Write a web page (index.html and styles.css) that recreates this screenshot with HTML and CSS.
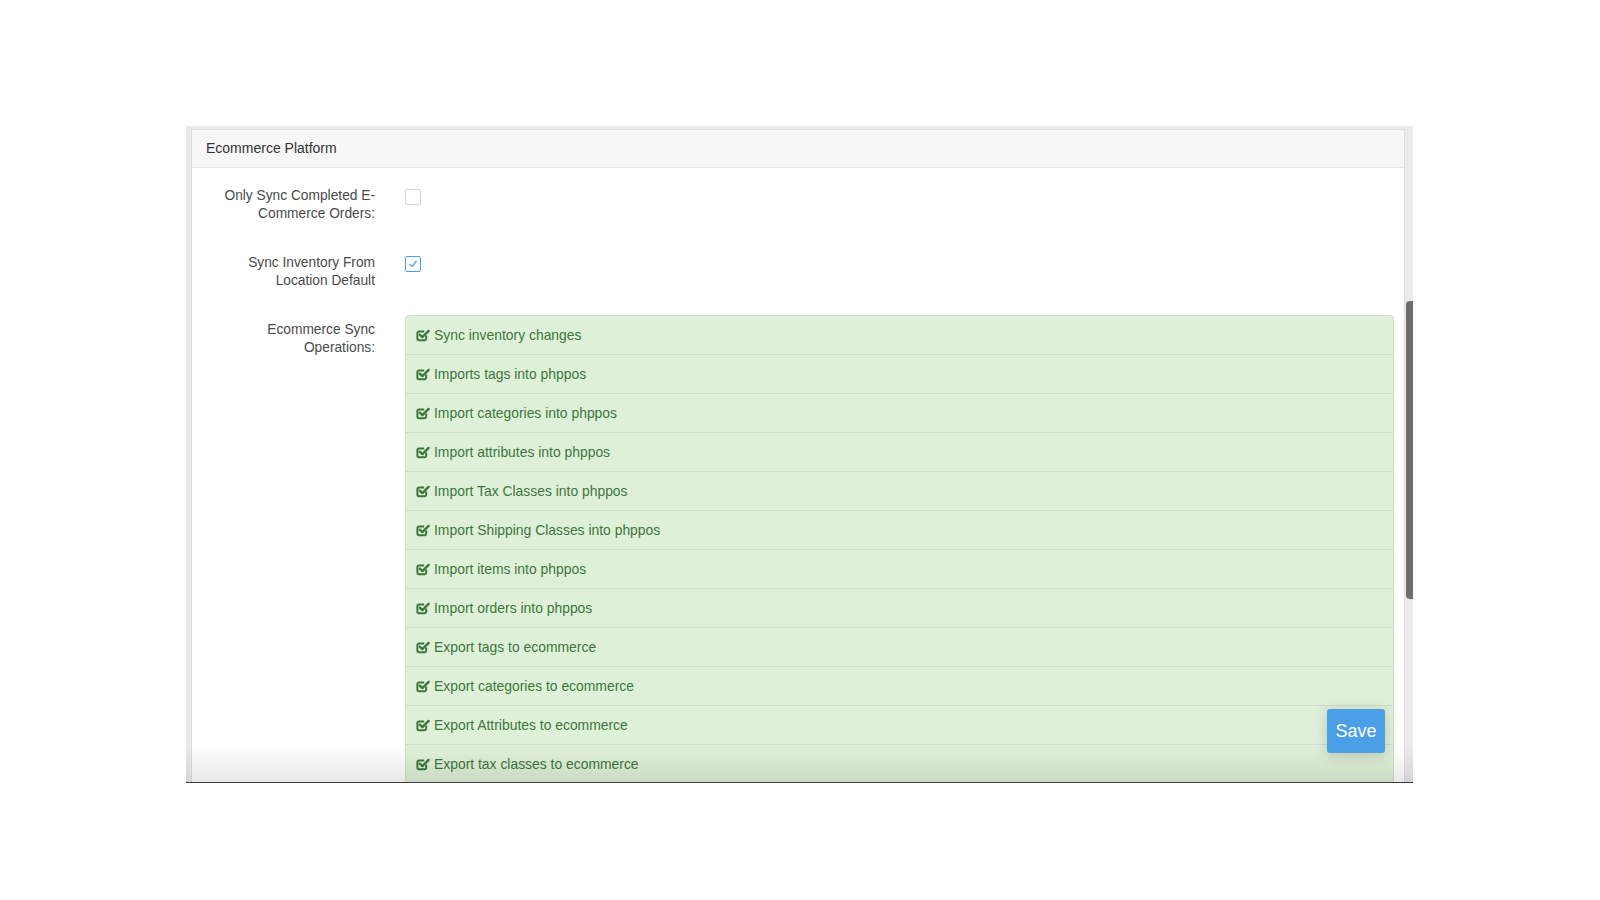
FILE: index.html
```html
<!DOCTYPE html>
<html lang="en">
<head>
<meta charset="utf-8">
<title>Ecommerce Platform</title>
<link rel="stylesheet" href="styles.css">
</head>
<body>
<svg class="defs" width="0" height="0" aria-hidden="true">
  <symbol id="chk" viewBox="0 0 14 14">
    <path d="M10.2 7.6 V10.6 a1.6 1.6 0 0 1 -1.6 1.6 H3 a1.6 1.6 0 0 1 -1.6 -1.6 V5 a1.6 1.6 0 0 1 1.6 -1.6 H8.2" fill="none" stroke="currentColor" stroke-width="2"/>
    <path d="M3.8 6.6 L6.4 9.1 L12.6 2.9" fill="none" stroke="currentColor" stroke-width="2.3" stroke-linecap="round" stroke-linejoin="round"/>
  </symbol>
</svg>
<div class="frame">
  <div class="panel">
    <div class="panel-heading">Ecommerce Platform</div>
    <div class="panel-body">
      <div class="form-group">
        <label class="control-label">Only Sync Completed E-Commerce Orders:</label>
        <div class="control"><span class="checkbox"></span></div>
      </div>
      <div class="form-group">
        <label class="control-label">Sync Inventory From Location Default</label>
        <div class="control">
          <span class="checkbox checked">
            <svg viewBox="0 0 16 16" width="14" height="14"><path d="M4.2 8.4 L6.9 11 L11.8 4.8" fill="none" stroke="#4a9fe6" stroke-width="1.5" stroke-linecap="round" stroke-linejoin="round"/></svg>
          </span>
        </div>
      </div>
      <div class="form-group">
        <label class="control-label">Ecommerce Sync Operations:</label>
        <div class="control">
          <ul class="ops">
            <li><svg class="ico"><use href="#chk"/></svg>Sync inventory changes</li>
            <li><svg class="ico"><use href="#chk"/></svg>Imports tags into phppos</li>
            <li><svg class="ico"><use href="#chk"/></svg>Import categories into phppos</li>
            <li><svg class="ico"><use href="#chk"/></svg>Import attributes into phppos</li>
            <li><svg class="ico"><use href="#chk"/></svg>Import Tax Classes into phppos</li>
            <li><svg class="ico"><use href="#chk"/></svg>Import Shipping Classes into phppos</li>
            <li><svg class="ico"><use href="#chk"/></svg>Import items into phppos</li>
            <li><svg class="ico"><use href="#chk"/></svg>Import orders into phppos</li>
            <li><svg class="ico"><use href="#chk"/></svg>Export tags to ecommerce</li>
            <li><svg class="ico"><use href="#chk"/></svg>Export categories to ecommerce</li>
            <li><svg class="ico"><use href="#chk"/></svg>Export Attributes to ecommerce</li>
            <li><svg class="ico"><use href="#chk"/></svg>Export tax classes to ecommerce</li>
          </ul>
        </div>
      </div>
    </div>
  </div>
  <div class="fade"></div>
  <div class="scroll-thumb"></div>
  <button class="save">Save</button>
</div>
</body>
</html>
```
FILE: styles.css
```css
html, body {
  margin: 0;
  padding: 0;
  background: #ffffff;
}
body {
  font-family: "Liberation Sans", Arial, sans-serif;
}
.defs {
  position: absolute;
  width: 0;
  height: 0;
  overflow: hidden;
}
.frame {
  position: relative;
  box-sizing: border-box;
  margin: 126px 0 0 186px;
  width: 1227px;
  height: 657px;
  padding: 3px 8px 0 5px;
  background: #eaeaec;
  border-bottom: 1px solid #3c3c3c;
  overflow: hidden;
}
.panel {
  background: #ffffff;
  border: 1px solid #dedede;
  border-bottom: none;
  height: 700px;
}
.panel-heading {
  background: #f7f7f7;
  border-bottom: 1px solid #e6e6e6;
  padding: 10px 15px 10px 14px;
  font-size: 14px;
  line-height: 17px;
  color: #333333;
}
.panel-body {
  padding: 13px 10px 0 0;
}
.form-group {
  display: grid;
  grid-template-columns: 184px 1fr;
  column-gap: 29px;
  margin-bottom: 25px;
}
.control-label {
  padding: 6px 1px 0 28px;
  text-align: right;
  font-size: 13.75px;
  line-height: 18px;
  color: #4a4a4a;
}
.control {
  min-height: 42px;
}
.checkbox {
  box-sizing: border-box;
  display: flex;
  align-items: center;
  justify-content: center;
  width: 16px;
  height: 16px;
  margin-top: 8px;
  border: 1px solid #d4d4d4;
  border-radius: 2px;
  background: #ffffff;
}
.checkbox.checked {
  border-color: #4a9fe6;
}
.ops {
  list-style: none;
  margin: 0;
  padding: 0;
  background: #dff0d8;
  border: 1px solid #d3dccf;
  border-radius: 4px;
}
.ops li {
  display: flex;
  align-items: center;
  padding: 10px 10px 10px 10px;
  font-size: 13.9px;
  line-height: 19px;
  height: 18px;
  color: #3c763d;
}
.ops li + li {
  border-top: 1px solid #d3dbd0;
}
.ico {
  width: 14px;
  height: 14px;
  margin-right: 4px;
  color: #3c763d;
  flex: none;
}
.fade {
  position: absolute;
  left: 0;
  right: 0;
  bottom: 0;
  height: 36px;
  background: linear-gradient(to bottom, rgba(0,0,0,0), rgba(0,0,0,0.09));
  pointer-events: none;
}
.scroll-thumb {
  position: absolute;
  top: 175px;
  right: 0;
  width: 7px;
  height: 298px;
  background: #6e6e6e;
  border-radius: 4px 0 0 4px;
}
.save {
  position: absolute;
  right: 28px;
  bottom: 29px;
  width: 58px;
  height: 44px;
  border: none;
  border-radius: 3px;
  background: #4a9fe6;
  color: #ffffff;
  font-family: "Liberation Sans", Arial, sans-serif;
  font-size: 18px;
  padding: 0;
  box-shadow: 0 2px 14px rgba(0,0,0,0.18);
}
```
